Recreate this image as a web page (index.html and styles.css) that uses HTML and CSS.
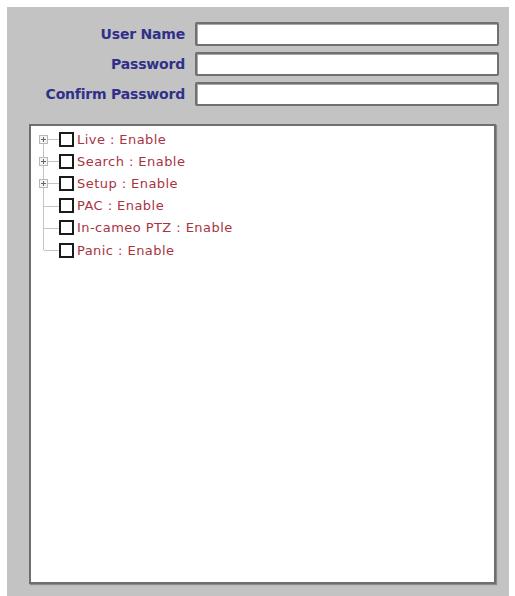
FILE: index.html
```html
<!DOCTYPE html>
<html>
<head>
<meta charset="utf-8">
<link rel="stylesheet" href="styles.css">
</head>
<body>
<div class="panel">
  <div class="form">
    <div class="row"><label>User Name</label><div class="input"></div></div>
    <div class="row"><label>Password</label><div class="input"></div></div>
    <div class="row"><label>Confirm Password</label><div class="input"></div></div>
  </div>
  <div class="tree">
    <ul class="items">
      <li class="item"><span class="exp"><svg width="9" height="9" viewBox="0 0 9 9"><rect x="0.5" y="0.5" width="8" height="8" fill="#f4f4f4" stroke="#b8b8b8"/><path d="M2 4.5h5M4.5 2v5" stroke="#666" stroke-width="1"/></svg></span><span class="cb"></span><span class="txt">Live : Enable</span></li>
      <li class="item"><span class="exp"><svg width="9" height="9" viewBox="0 0 9 9"><rect x="0.5" y="0.5" width="8" height="8" fill="#f4f4f4" stroke="#b8b8b8"/><path d="M2 4.5h5M4.5 2v5" stroke="#666" stroke-width="1"/></svg></span><span class="cb"></span><span class="txt">Search : Enable</span></li>
      <li class="item"><span class="exp"><svg width="9" height="9" viewBox="0 0 9 9"><rect x="0.5" y="0.5" width="8" height="8" fill="#f4f4f4" stroke="#b8b8b8"/><path d="M2 4.5h5M4.5 2v5" stroke="#666" stroke-width="1"/></svg></span><span class="cb"></span><span class="txt">Setup : Enable</span></li>
      <li class="item leaf"><span class="exp"></span><span class="cb"></span><span class="txt">PAC : Enable</span></li>
      <li class="item leaf"><span class="exp"></span><span class="cb"></span><span class="txt">In-cameo PTZ : Enable</span></li>
      <li class="item leaf last"><span class="exp"></span><span class="cb"></span><span class="txt">Panic : Enable</span></li>
    </ul>
  </div>
</div>
</body>
</html>
```
FILE: styles.css
```css
html, body { margin: 0; padding: 0; background: #fff; }
body { width: 515px; height: 596px; overflow: hidden; font-family: "Liberation Sans", Arial, sans-serif; }
.panel {
  margin: 7px 0 0 7px;
  width: 502px;
  height: 589px;
  background: #c3c3c3;
  box-sizing: border-box;
  padding: 15px 0 0 22px;
  display: flex;
  flex-direction: column;
}
.form { display: flex; flex-direction: column; gap: 6px; }
.row { display: flex; align-items: center; }
.row label {
  text-align: right;
  font-family: "DejaVu Sans", Verdana, sans-serif;
  font-weight: bold;
  font-size: 14px;
  letter-spacing: -0.2px;
  color: #30308a;
  padding-right: 10px;
  box-sizing: border-box;
  margin-left: -12px;
  width: 178px;
}
.input {
  width: 304px;
  height: 24px;
  box-sizing: border-box;
  background: #fff;
  border: 2px solid #707070;
  border-radius: 2px;
  box-shadow: inset 1px 1px 0 #a8a8a8;
}
.tree {
  margin-top: 18px;
  width: 467px;
  height: 460px;
  box-sizing: border-box;
  background: #fff;
  border: 2px solid #6e6e6e;
  box-shadow: 1px 1px 1px #8a8a8a;
}
.items { list-style: none; margin: 0; padding: 2px 0 0 8px; position: relative; }
.item { display: flex; align-items: center; height: 22.2px; position: relative; }
.item::before {
  content: "";
  position: absolute;
  left: 4px;
  top: 0;
  bottom: 0;
  border-left: 1px solid #c4c4c4;
}
.item:first-child::before { top: 11px; }
.item.last::before { bottom: 11px; }
.item::after {
  content: "";
  position: absolute;
  left: 5px;
  width: 16px;
  top: 11px;
  border-top: 1px solid #c4c4c4;
}
.exp { width: 9px; height: 9px; position: relative; z-index: 1; display: flex; }
.cb {
  width: 15px;
  height: 15px;
  box-sizing: border-box;
  border: 2px solid #1a1a1a;
  margin-left: 11px;
  background: #fff;
  position: relative;
  z-index: 1;
}
.txt {
  margin-left: 3px;
  font-family: "DejaVu Sans", Verdana, sans-serif;
  font-size: 13px;
  letter-spacing: 0.45px;
  color: #a8343f;
  white-space: nowrap;
}
```
